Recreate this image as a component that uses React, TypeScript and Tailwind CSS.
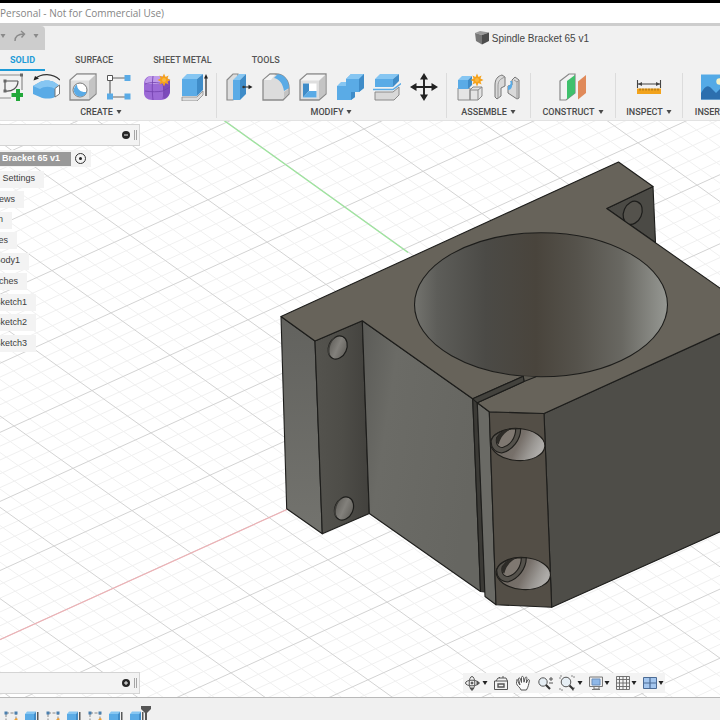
import type { ReactNode } from "react";
import clsx from "clsx";

const BLUE = "#5aabe6";
const BLUE_DARK = "#3f8cc8";
const BLUE_LIGHT = "#86c6f2";
const EDGE = "#8a8a8a";

interface Tool {
    name: string;
    icon: ReactNode;
}

interface ToolGroup {
    label: string;
    width: string;
    tools: Tool[];
}

function ToolSvg({ children }: { children: ReactNode }) {
    return (
        <svg viewBox="0 0 28 28" className="h-7 w-7" fill="none" aria-hidden="true">
            {children}
        </svg>
    );
}

function Spark({ x, y }: { x: number; y: number }) {
    return (
        <g transform={`translate(${x} ${y})`} fill="#f5a21b">
            <path d="M0-6.5 1.5-3 4.6-4.6 3.4-1.4 6.5 0 3.4 1.4 4.6 4.6 1.5 3 0 6.5-1.5 3-4.6 4.6-3.4 1.4-6.5 0-3.4-1.4-4.6-4.6-1.5-3Z" />
            <circle r="2" fill="#fbb840" />
        </g>
    );
}

const toolGroups: ToolGroup[] = [
    {
        label: "CREATE",
        width: "w-[231px] -ml-[14px]",
        tools: [
            {
                name: "Create Sketch",
                icon: (
                    <ToolSvg>
                        <path d="M5 2h22M27 2v15M5 25h11" stroke="#8c8c8c" strokeWidth="1.2" />
                        <path d="M10 8h13M10 8v10M10 18c7 1 13-3 13-10" stroke="#555" strokeWidth="1.2" />
                        <path d="M25 .5h3v3h-3zM8.5 16.5h3v3h-3zM8.5 6.5h3v3h-3z" fill="#666" />
                        <path d="M21 16h4v4h4v4H25V28h-4v-4h-4.500v-4H21Z" fill="#22a83a" />
                    </ToolSvg>
                ),
            },
            {
                name: "Revolve",
                icon: (
                    <ToolSvg>
                        <path d="M3 6C9 0 21 0 28 7" stroke="#333" strokeWidth="1.2" />
                        <path d="M1.500 7.500 3 3l4 2.500Z" fill="#222" />
                        <path d="M1 13 8 9c4-2 10-2 14 0l6 4-5 11c-4 2-11 2-15 0l-7-3Z" fill={BLUE} />
                        <path d="M1 13 8 9c4-2 10-2 14 0l6 4-5 3c-4-3-11-3-15 0Z" fill={BLUE_LIGHT} />
                        <path d="M23 15.500 27.500 12v9L23 24Z" fill="#fff" stroke="#777" />
                    </ToolSvg>
                ),
            },
            {
                name: "Hole",
                icon: (
                    <ToolSvg>
                        <path d="M1 7 8 1h19v20l-7 6H1Z" fill="#dedede" stroke={EDGE} strokeWidth="1.3" />
                        <path d="M1.700 7.500 8 1.700h18.300L20 7.500Z" fill="#f4f4f4" />
                        <path d="M20 8 26.400 2v18.500L20 26.300Z" fill="#c4c4c4" />
                        <circle cx="11" cy="17" r="7" fill="#fff" stroke="#777" />
                        <path d="M8 11.500c0 5 4 8 9.500 7.500A6.500 6.500 0 1 1 8 11.500Z" fill={BLUE} />
                    </ToolSvg>
                ),
            },
            {
                name: "Rectangular Pattern",
                icon: (
                    <ToolSvg>
                        <path d="M5 5h17M4 6v17M5 24h17" stroke="#666" strokeWidth="1.2" />
                        <path d="M1.500 2.500h5v5h-5z" fill="#fff" stroke="#555" />
                        <path d="M18.500 2h6v6h-6zM1 20.500h6v6H1zM18.500 20.500h6v6h-6z" fill={BLUE} />
                    </ToolSvg>
                ),
            },
            {
                name: "Create Form",
                icon: (
                    <ToolSvg>
                        <path d="M1 11c0-5 3-8 7-8h9c6 0 10 3 10 8v7c0 5-4 9-9 9H9c-5 0-8-3-8-7Z" fill="#9c6ad6" />
                        <path d="M2 9c2-5 4-6 8-6h8c5 0 7 2 8 4l-6 4H3Z" fill="#c09bea" />
                        <path d="M20 11c4-1 6-3 7-5v12c0 4-3 7-6 8Z" fill="#7c4abb" />
                        <path d="M2 11c6-2 12-2 18 0M2 18c6 1 13 1 18 0l7-4M10 3c-1 8-1 16 0 24M20 11c1 5 1 10 0 15" stroke="#7240ad" strokeWidth=".8" />
                        <Spark x={21} y={7} />
                    </ToolSvg>
                ),
            },
            {
                name: "Extrude",
                icon: (
                    <ToolSvg>
                        <path d="M2 24h15l6-6v4l-6 6H2Z" fill="#ddd" stroke={EDGE} strokeWidth=".8" />
                        <path d="M2 6h15v17H2Z" fill={BLUE} />
                        <path d="M2 6 7 1h16l-6 5Z" fill={BLUE_LIGHT} />
                        <path d="m17 6 6-5v16l-6 6Z" fill={BLUE_DARK} />
                        <path d="M26 4v19" stroke="#222" strokeWidth="1.2" />
                        <path d="m26 1 2 4.500h-4Z" fill="#222" />
                    </ToolSvg>
                ),
            },
        ],
    },
    {
        label: "MODIFY",
        width: "w-[230px]",
        tools: [
            {
                name: "Press Pull",
                icon: (
                    <ToolSvg>
                        <path d="M2 7 8 1h5v21l-5 5H2Z" fill="#ddd" stroke={EDGE} strokeWidth="1.200" />
                        <path d="M8 7h7v20H8Z" fill={BLUE} />
                        <path d="m8 7 6-6h7l-6 6Z" fill={BLUE_LIGHT} />
                        <path d="m15 7 6-6v20l-6 6Z" fill={BLUE_DARK} />
                        <path d="M18 14h7" stroke="#222" />
                        <path d="m27.500 14-4-2.200v4.400Z" fill="#222" />
                        <circle cx="18.500" cy="14" r="1.200" fill="#333" />
                    </ToolSvg>
                ),
            },
            {
                name: "Fillet",
                icon: (
                    <ToolSvg>
                        <path d="M1 7 8 1h6c7 0 13 6 13 14v6l-6 6H1Z" fill="#dcdcdc" stroke={EDGE} strokeWidth="1.300" />
                        <path d="M1.700 7 8 1.700h5L9 7Z" fill="#f5f5f5" />
                        <path d="M12 5 15.500 1.300C22 1.500 27 7 27 15l-5 3C21 11 17.500 6 12 5Z" fill={BLUE} />
                        <path d="M22 19 26.400 16v4.500L22 25Z" fill="#c3c3c3" />
                    </ToolSvg>
                ),
            },
            {
                name: "Shell",
                icon: (
                    <ToolSvg>
                        <path d="M1 7 8 1h19v20l-7 6H1Z" fill="#dedede" stroke={EDGE} strokeWidth="1.300" />
                        <path d="M1.700 7.500 8 1.700h18.300L20 7.500Z" fill="#f4f4f4" />
                        <path d="M20 8 26.400 2v18.500L20 26.300Z" fill="#c4c4c4" />
                        <path d="M4 10.500h13.500v14H4Z" fill="#fff" />
                        <path d="M4 10.500h6V18l-6 6.500Z" fill={BLUE_DARK} />
                        <path d="M4 24.500 10 18h7.500v6.500Z" fill={BLUE} />
                    </ToolSvg>
                ),
            },
            {
                name: "Combine",
                icon: (
                    <ToolSvg>
                        <path d="M1 13h9V6l5-5h13v14l-5 4h-4v5l-4 3H1Z" fill={BLUE} />
                        <path d="m1 13 4-4h5v4ZM10 6l5-5h13l-5 5Z" fill={BLUE_LIGHT} />
                        <path d="m23 6 5-5v14l-5 4ZM15 19h4v5l-4 3Z" fill={BLUE_DARK} />
                    </ToolSvg>
                ),
            },
            {
                name: "Split Body",
                icon: (
                    <ToolSvg>
                        <path d="M2 19h18l6-5v8l-5 5H2Z" fill="#d8d8d8" stroke={EDGE} />
                        <path d="M2 6h18v8H2Z" fill={BLUE} />
                        <path d="m2 6 5-5h19l-6 5Z" fill={BLUE_LIGHT} />
                        <path d="m20 6 6-5v7l-6 6Z" fill={BLUE_DARK} />
                        <path d="M0 16.500h20l8-6" stroke={BLUE} strokeWidth="1.500" />
                    </ToolSvg>
                ),
            },
            {
                name: "Move",
                icon: (
                    <ToolSvg>
                        <path d="M14 4v20M4 14h20" stroke="#222" strokeWidth="1.900" />
                        <path d="m14 0 4 6.500h-8ZM14 28l4-6.500h-8ZM0 14l6.500-4v8ZM28 14l-6.500-4v8Z" fill="#222" />
                    </ToolSvg>
                ),
            },
        ],
    },
    {
        label: "ASSEMBLE",
        width: "w-[84px]",
        tools: [
            {
                name: "New Component",
                icon: (
                    <ToolSvg>
                        <path d="M2 15h12v12H2ZM14 17l3-3h9v9l-4 4h-8Z" fill="#e4e4e4" stroke={EDGE} />
                        <path d="M14 17h8v10M22 17l4-3" stroke={EDGE} />
                        <path d="M2 7h10v9H2Z" fill={BLUE} />
                        <path d="m2 7 4-4h10l-4 4Z" fill={BLUE_LIGHT} />
                        <path d="m12 7 4-4v9l-4 4Z" fill={BLUE_DARK} />
                        <Spark x={21} y={7} />
                    </ToolSvg>
                ),
            },
            {
                name: "Joint",
                icon: (
                    <ToolSvg>
                        <path d="M2 12C2 6 5 3 9 2l3 2v9l-4 2v8l-4 3-2-2Z" fill="#d9d9d9" stroke="#777" />
                        <path d="M5 13c0-5 2-7 7-9M5 13v12" stroke="#999" />
                        <path d="m26 7-4-3-3 3v5l-4 1v7l9 6 2-1Z" fill="#d9d9d9" stroke="#777" />
                        <path d="M24 26V9l2-2M24 9l-3-2" stroke="#999" />
                        <path d="M17 8c1 2 1 4-2 5v4c4 0 5-5 4-9Z" fill={BLUE} />
                    </ToolSvg>
                ),
            },
        ],
    },
    {
        label: "CONSTRUCT",
        width: "w-[85px]",
        tools: [
            {
                name: "Offset Plane",
                icon: (
                    <ToolSvg>
                        <path d="M1 8 10 1h6v19l-9 7H1Z" fill="#f2f2f2" stroke="#888" strokeWidth="1.200" />
                        <path d="M8 8 16 2v18l-8 6.500Z" fill="#3fc06c" />
                        <path d="M19 8.500 27 2v18l-8 6.500Z" fill="#e08a5a" />
                    </ToolSvg>
                ),
            },
        ],
    },
    {
        label: "INSPECT",
        width: "w-[67px]",
        tools: [
            {
                name: "Measure",
                icon: (
                    <ToolSvg>
                        <path d="M2.500 7v8M25.500 7v8M3 11h22" stroke="#444" strokeWidth="1.100" />
                        <path d="m3 11 4-2v4ZM25 11l-4-2v4Z" fill="#444" />
                        <path d="M2 15.500h24v5.500H2Z" fill="#f2a31c" />
                        <path d="M5 15.500v2M8 15.500v2M11 15.500v2M14 15.500v2M17 15.500v2M20 15.500v2M23 15.500v2" stroke="#7a5410" strokeWidth=".8" />
                    </ToolSvg>
                ),
            },
        ],
    },
    {
        label: "INSERT",
        width: "w-[64px]",
        tools: [
            {
                name: "Insert Image",
                icon: (
                    <ToolSvg>
                        <path d="M0 1.500h28v25H0Z" fill="#54aae6" />
                        <path d="M0 20c4-7 7-9 11-4l4 4 4-4c4-3 7 0 9 4v6.500H0Z" fill="#2c6fae" />
                        <circle cx="18.500" cy="8.500" r="3.200" fill="#f6f3c8" />
                    </ToolSvg>
                ),
            },
        ],
    },
];

const tabs = ["SOLID", "SURFACE", "SHEET METAL", "TOOLS"];

const browserRows = [
    { label: "Settings", width: "w-11" },
    { label: "ews", width: "w-6" },
    { label: "n", width: "w-3" },
    { label: "es", width: "w-[17px]" },
    { label: "Body1", width: "w-[29px]" },
    { label: "ches", width: "w-[27px]" },
    { label: "Sketch1", width: "w-9" },
    { label: "Sketch2", width: "w-9" },
    { label: "Sketch3", width: "w-9" },
];

function Caret({ className }: { className?: string }) {
    return (
        <svg viewBox="0 0 6 6" className={clsx("h-[6px] w-[6px] shrink-0", className)} fill="currentColor" aria-hidden="true">
            <path d="M.5 1h5L3 5Z" />
        </svg>
    );
}

function TitleBar() {
    return (
        <header className="shrink-0 border-t-[3px] border-b-[3px] border-t-black border-b-[#cdcdcd] bg-white">
            <h1 className="h-5 overflow-hidden font-['Open_Sans',sans-serif] text-[10px] leading-5 whitespace-nowrap text-[#858585]">
                Personal - Not for Commercial Use)
            </h1>
        </header>
    );
}

function Ribbon() {
    return (
        <div className="shrink-0 border-b border-[#e2e2e2] bg-[#f1f1f1]">
            <div className="flex h-6 items-stretch">
                <div className="flex w-[45px] items-center justify-between rounded-tr bg-[#cdcdcd] pr-[6px] pb-1 text-[#8a8a8a]">
                    <button type="button" aria-label="Undo history">
                        <Caret />
                    </button>
                    <button type="button" aria-label="Redo">
                        <svg viewBox="0 0 12 12" className="h-3 w-3" fill="none" stroke="currentColor" strokeWidth="1.400" aria-hidden="true">
                            <path d="M1 11C1 6 4 4 10 4M7 1l3.500 3L7.500 7.500" />
                        </svg>
                    </button>
                    <button type="button" aria-label="Redo history">
                        <Caret />
                    </button>
                </div>
                <div className="mr-[131px] ml-auto flex items-center gap-[3px] text-[10px] text-[#444]">
                    <svg viewBox="0 0 14 14" className="h-[14px] w-[14px]" aria-hidden="true">
                        <path d="M0 2 5 0l9 1.500L7 4Z" fill="#9c9c9c" />
                        <path d="m0 2 7 2v9.500L1 10Z" fill="#777" />
                        <path d="m7 4 7-2.500V10l-7 3.500Z" fill="#4d4d4d" />
                    </svg>
                    <span>Spindle Bracket 65 v1</span>
                </div>
            </div>

            <nav className="flex h-[21px] items-stretch gap-5 font-[Roboto,sans-serif] text-[9px]">
                {tabs.map((tab, index) => (
                    <button
                        key={tab}
                        type="button"
                        className={clsx(
                            "border-b-2 px-[10px] pt-[2px] whitespace-nowrap",
                            index === 0 ? "border-[#1e9bd7] font-bold text-[#1e9bd7]" : "border-transparent font-medium text-[#555]"
                        )}
                    >
                        {tab}
                    </button>
                ))}
            </nav>

            <div className="flex overflow-hidden pt-[2px] pb-[2px]">
                {toolGroups.map((group) => (
                    <section
                        key={group.label}
                        className={clsx("flex shrink-0 flex-col items-center gap-[5px] border-r border-[#dcdcdc]", group.width)}
                    >
                        <div className="flex gap-[9px]">
                            {group.tools.map((tool) => (
                                <button key={tool.name} type="button" aria-label={tool.name}>
                                    {tool.icon}
                                </button>
                            ))}
                        </div>
                        <button
                            type="button"
                            className="flex items-center gap-[3px] font-[Roboto,sans-serif] text-[9px] leading-3 font-medium whitespace-nowrap text-[#4a4a4a]"
                        >
                            {group.label}
                            <Caret />
                        </button>
                    </section>
                ))}
            </div>
        </div>
    );
}

// Ground grid: two direction vectors of one major cell, in canvas units
const ORIGIN = [269, 518];
const DOWN = [59, 42.3];
const UP = [78, -35.4];

function gridPath(major: boolean) {
    let d = "";
    for (let i = -70; i <= 70; i++) {
        if ((i % 5 === 0) !== major) continue;
        const k = i / 5;
        const ax = ORIGIN[0] + DOWN[0] * k;
        const ay = ORIGIN[1] + DOWN[1] * k;
        d += `M${ax - UP[0] * 16} ${ay - UP[1] * 16}L${ax + UP[0] * 16} ${ay + UP[1] * 16}`;
        const bx = ORIGIN[0] + UP[0] * k;
        const by = ORIGIN[1] + UP[1] * k;
        d += `M${bx - DOWN[0] * 16} ${by - DOWN[1] * 16}L${bx + DOWN[0] * 16} ${by + DOWN[1] * 16}`;
    }
    return d;
}

function MountHole({ x, y, dark }: { x: number; y: number; dark?: boolean }) {
    return (
        <g transform={`translate(${x} ${y}) rotate(24)`} stroke="#1d1d1b" strokeWidth="1.200">
            <ellipse rx="9" ry="12" fill={dark ? "#54524c" : "url(#holeShade)"} />
            {!dark && <path d="M-6-8.500C-9-3-8 6-3 11-8 10-9 5-9 0-9-4-8-7-6-8.500Z" fill="#3f3e3a" stroke="none" />}
        </g>
    );
}

function ScrewHole({ x, y }: { x: number; y: number }) {
    return (
        <g transform={`translate(${x} ${y})`} stroke="#1f1e1b" strokeWidth="1.100">
            <ellipse rx="27.200" ry="16" transform="rotate(4)" fill="url(#boreShade)" />
            <path d="M-26.500-4C-24-12-12-16 3-16 3-5-5 6-16 8.500-23 8-27 3-26.500-4Z" fill="#55524c" />
            <path d="M-21-7C-17-13-11-15.500-2-15.700-2-6-8 1-15 3-21 3-22-2-21-7Z" fill="#7f7871" />
            <path d="M-21-7C-17-13-13-15-7-15.500-13-12-17-8-19 0-22-2-22-5-21-7Z" fill="#2d2b27" stroke="none" />
        </g>
    );
}

function Viewport() {
    return (
        <svg viewBox="0 121 720 577" preserveAspectRatio="xMidYMid slice" className="absolute inset-0 h-full w-full" role="img" aria-label="Spindle bracket model">
            <defs>
                <linearGradient id="boreWall">
                    <stop offset="0" stopColor="#73736e" />
                    <stop offset=".09" stopColor="#5d5d59" />
                    <stop offset=".28" stopColor="#4b4a46" />
                    <stop offset=".48" stopColor="#49443c" />
                    <stop offset=".64" stopColor="#55524b" />
                    <stop offset=".82" stopColor="#696862" />
                    <stop offset="1" stopColor="#969893" />
                </linearGradient>
                <linearGradient id="frontFace" x1="0" y1="0" x2="1" y2=".35">
                    <stop offset="0" stopColor="#5b5b57" />
                    <stop offset=".3" stopColor="#6b6b66" />
                    <stop offset="1" stopColor="#666661" />
                </linearGradient>
                <linearGradient id="earSide" x2="0" y2="1">
                    <stop offset="0" stopColor="#62625e" />
                    <stop offset="1" stopColor="#73736e" />
                </linearGradient>
                <linearGradient id="earFront">
                    <stop offset="0" stopColor="#54534e" />
                    <stop offset=".5" stopColor="#4e4d48" />
                    <stop offset="1" stopColor="#42413d" />
                </linearGradient>
                <linearGradient id="holeShade">
                    <stop offset="0" stopColor="#65635e" />
                    <stop offset=".5" stopColor="#83817c" />
                    <stop offset="1" stopColor="#66645f" />
                </linearGradient>
                <linearGradient id="boreShade" x2="1" y2=".25">
                    <stop offset=".2" stopColor="#6c665f" />
                    <stop offset=".6" stopColor="#77706a" />
                    <stop offset=".85" stopColor="#9b9894" />
                    <stop offset="1" stopColor="#adaba8" />
                </linearGradient>
            </defs>

            <path d={gridPath(false)} stroke="#f0f0f0" strokeWidth="1" />
            <path d={gridPath(true)} stroke="#d3d3d3" strokeWidth="1" />
            <path d="M-100 685.500 287 510" stroke="#eeb0b4" strokeWidth="1.200" />
            <path d="M166 79.500 408 253" stroke="#9be59b" strokeWidth="1.200" />

            <g stroke="#1d1d1b" strokeWidth="1.100" strokeLinejoin="round">
                {/* Rear ear */}
                <path d="M606.700 209 653 187 655.500 243Z" fill="#4b4a45" />
                <MountHole x={632.700} y={213.300} dark />

                {/* Front ear */}
                <path d="M281 317 315 341.500 322.300 534.300 286.700 509.300Z" fill="url(#earSide)" />
                <path d="M315 341.500 362.300 321.300 369.300 514 322.300 534.300Z" fill="url(#earFront)" />
                <MountHole x={337.700} y={348} />
                <MountHole x={344} y={509} />

                {/* Body */}
                <path d="M362.300 321.300 472.700 399.300 480.500 592 369.300 514Z" fill="url(#frontFace)" />
                <path d="M472.700 399.300 524 377 524 383 477.300 403 485 592.500 480.500 592Z" fill="#3b3a36" />
                <path d="M544 414 760 316 770 510 551.700 607.700Z" fill="#4e4d48" />
                <path d="M477.300 403.300 489.300 412.300 496 605.300 485 597Z" fill="#6a6a65" />
                <path d="M489.300 412.300 544 414 551.700 607.700 496 605.300Z" fill="#534e46" />

                <path
                    d="M281 317 618.500 162.500 653 187 606.700 209 759 316 544 414 489.300 412.300 477.300 403.300 524 382 523.300 376.700 472.700 399.300 362.300 321.300 315 341.500Z"
                    fill="#67635a"
                />
                <ellipse cx="541" cy="305.300" rx="126.500" ry="72" fill="url(#boreWall)" />
                <path d="M522 376.600 536 377.300 524 382.500Z" fill="#5a574f" stroke="none" />
                <path d="M523.300 376.700 524 382 536 377.200" fill="none" />
                <path d="M472.700 399.300 523.300 376.700 524 382 477.300 403.300Z" fill="#43423d" />
            </g>

            <ScrewHole x={517.700} y={445} />
            <ScrewHole x={523.300} y={574} />
        </svg>
    );
}

function PanelHandle({ label, plus }: { label: string; plus?: boolean }) {
    return (
        <div className="flex h-[22px] w-[140px] items-center justify-end gap-1 border border-l-0 border-[#d4d4d4] bg-[#f3f3f3] pr-[2px]">
            <button type="button" aria-label={label}>
                <svg viewBox="0 0 8 8" className="h-2 w-2" aria-hidden="true">
                    <circle cx="4" cy="4" r="4" fill="#262626" />
                    <path d={plus ? "M2 4h4M4 2v4" : "M2 4h4"} stroke="#f3f3f3" strokeWidth="1" />
                </svg>
            </button>
            <div className="h-[10px] w-[3px] border-x border-[#a5a5a5]" />
        </div>
    );
}

function BrowserPanel() {
    return (
        <div className="pt-[3px]">
            <PanelHandle label="Collapse browser" />
            <ul className="mt-1 flex h-[202px] flex-col justify-between text-[9px] text-[#3d3d3d]">
                <li className="flex h-[17px] w-[91px] items-center gap-1 bg-[#f3f3f3]">
                    <span className="flex h-[14px] w-[71px] items-center bg-[#999] pl-[2px] font-bold whitespace-nowrap text-white">
                        Bracket 65 v1
                    </span>
                    <input
                        type="radio"
                        name="active"
                        defaultChecked
                        aria-label="Activate component"
                        className="h-[11px] w-[11px] appearance-none rounded-full border border-[#333] bg-[#222] bg-clip-content p-[3px]"
                    />
                </li>
                {browserRows.map((row) => (
                    <li
                        key={row.label}
                        className={clsx("flex h-[17px] items-center justify-end overflow-hidden bg-[#f3f3f3] pr-[9px] whitespace-nowrap", row.width)}
                    >
                        {row.label}
                    </li>
                ))}
            </ul>
        </div>
    );
}

function NavSvg({ children }: { children: ReactNode }) {
    return (
        <svg viewBox="0 0 16 16" className="h-4 w-4 shrink-0" fill="none" stroke="#555" strokeWidth="1" aria-hidden="true">
            {children}
        </svg>
    );
}

const navItems = [
    {
        name: "Orbit",
        width: "w-6",
        caret: true,
        icon: (
            <NavSvg>
                <ellipse cx="8" cy="8" rx="6.500" ry="2.800" />
                <ellipse cx="8" cy="8" rx="2.800" ry="6.500" />
                <path d="m6 13 2 2.500 2-2.500ZM13 6l2.500 2L13 10Z" fill="#555" />
                <circle cx="8" cy="8" r="1" fill="#555" />
            </NavSvg>
        ),
    },
    {
        name: "Look At",
        width: "w-[17px]",
        icon: (
            <NavSvg>
                <path d="M1.500 6h13v8.500h-13ZM3 6l2-3h8l1.500 3M6 2l1 1M10 1v2" />
                <path d="M5 9h6v3H5Z" strokeWidth="1.400" />
            </NavSvg>
        ),
    },
    {
        name: "Pan",
        width: "w-[17px]",
        icon: (
            <NavSvg>
                <path
                    d="M6 15c-1-3-4-4-4.500-6.500C2-.5 2.500 7.500 5 10L3.500 4c0-1.500 1.500-1.500 2 0L6.500 7.500 6.500 2.500c0-1.500 1.700-1.500 2 0L9 7.200l1.200-4.400c.4-1.300 2-.9 1.700.5L11.300 8l1.500-3c.7-1 2-.3 1.600 1-.9 3.500-1 6-3 9Z"
                    fill="#fafafa"
                />
            </NavSvg>
        ),
    },
    {
        name: "Zoom",
        width: "w-[17px]",
        icon: (
            <NavSvg>
                <circle cx="6" cy="7" r="4.200" fill="#e6eef4" />
                <path d="m9 10 4 4" stroke="#333" strokeWidth="2.200" />
                <path d="M12 4h4M14 2v4M12 8h4" />
            </NavSvg>
        ),
    },
    {
        name: "Fit",
        width: "w-6",
        caret: true,
        icon: (
            <NavSvg>
                <path d="M1 4V1h3M12 1h3v3M15 12v3h-3M4 15H1v-3" strokeDasharray="2 1" stroke="#888" />
                <circle cx="7" cy="7" r="4.800" fill="#e6eef4" />
                <path d="m10.500 10.500 4 4" stroke="#333" strokeWidth="2.200" />
            </NavSvg>
        ),
    },
    {
        name: "Display Settings",
        width: "w-[22px]",
        caret: true,
        icon: (
            <NavSvg>
                <path d="M1.500 2h13v9.500h-13Z" fill="#eee" stroke="#777" />
                <path d="M4 4h8v6H4Z" fill="#8fb8e8" stroke="#6a8fbd" />
                <path d="M6 12v2h5v-2M4 14.500h8" stroke="#777" />
            </NavSvg>
        ),
    },
    {
        name: "Grid and Snaps",
        width: "w-[22px]",
        caret: true,
        icon: (
            <NavSvg>
                <path d="M1.500 1.500h13v13h-13ZM4.500 1.500v13M8 1.500v13M11.500 1.500v13M1.500 4.500h13M1.500 8h13M1.500 11.500h13" strokeWidth=".9" stroke="#666" />
            </NavSvg>
        ),
    },
    {
        name: "Viewports",
        width: "w-[22px]",
        caret: true,
        icon: (
            <NavSvg>
                <path d="M1.500 2.500h13v11h-13Z" fill="#a4c6ee" stroke="#4c6c96" />
                <path d="M8 2.500v11M1.500 8h13" stroke="#4c6c96" strokeWidth="1.200" />
            </NavSvg>
        ),
    },
];

function NavBar() {
    return (
        <div className="mr-[55px] flex h-5 items-center gap-[5px] bg-[#f3f3f3] px-px text-[#222]">
            {navItems.map((item) => (
                <button key={item.name} type="button" aria-label={item.name} className={clsx("flex shrink-0 items-center justify-between", item.width)}>
                    {item.icon}
                    {item.caret && <Caret />}
                </button>
            ))}
        </div>
    );
}

const features = ["sketch", "extrude", "sketch", "extrude", "sketch", "extrude", "extrude"];

function Timeline() {
    return (
        <footer className="flex h-[23px] shrink-0 items-start gap-[7px] overflow-hidden border-t border-[#b9b9b9] bg-[#f0f0f0] pl-1">
            {features.map((feature, index) => (
                <button key={index} type="button" aria-label={feature} className="mt-[13px] shrink-0">
                    <svg viewBox="0 0 14 14" className="h-[14px] w-[14px]" fill="none" aria-hidden="true">
                        {feature === "sketch" ? (
                            <>
                                <path d="M2 2h10v10H2Z" stroke="#8a8a8a" strokeDasharray="3 1.500" />
                                <path d="M.5.5h3v3h-3zM10.500.5h3v3h-3z" fill="#4a7fae" />
                                <path d="m8 11 4-4 2 1-5 5Z" fill="#f0a030" />
                            </>
                        ) : (
                            <>
                                <path d="M0 3h9v10H0Z" fill={BLUE} />
                                <path d="m0 3 2-2.500h9L9 3Z" fill={BLUE_LIGHT} />
                                <path d="m9 3 2-2.500v10L9 13Z" fill={BLUE_DARK} />
                                <path d="M12.800 1v12" stroke="#333" strokeWidth="1.200" />
                            </>
                        )}
                    </svg>
                </button>
            ))}
            <svg viewBox="0 0 12 16" className="mt-2 -ml-[11px] h-4 w-3 shrink-0" aria-hidden="true">
                <path d="M1 0h10v3L7 7v9H5V7L1 3Z" fill="#555" />
            </svg>
        </footer>
    );
}

export default function App() {
    return (
        <div className="flex h-screen flex-col overflow-hidden bg-white font-['Liberation_Sans',Arial,sans-serif]">
            <TitleBar />
            <Ribbon />
            <main className="relative flex min-h-0 flex-1 flex-col justify-between">
                <Viewport />
                <div className="relative">
                    <BrowserPanel />
                </div>
                <div className="relative mb-[3px] flex items-center justify-between">
                    <PanelHandle label="Expand comments" plus />
                    <NavBar />
                </div>
            </main>
            <Timeline />
        </div>
    );
}
